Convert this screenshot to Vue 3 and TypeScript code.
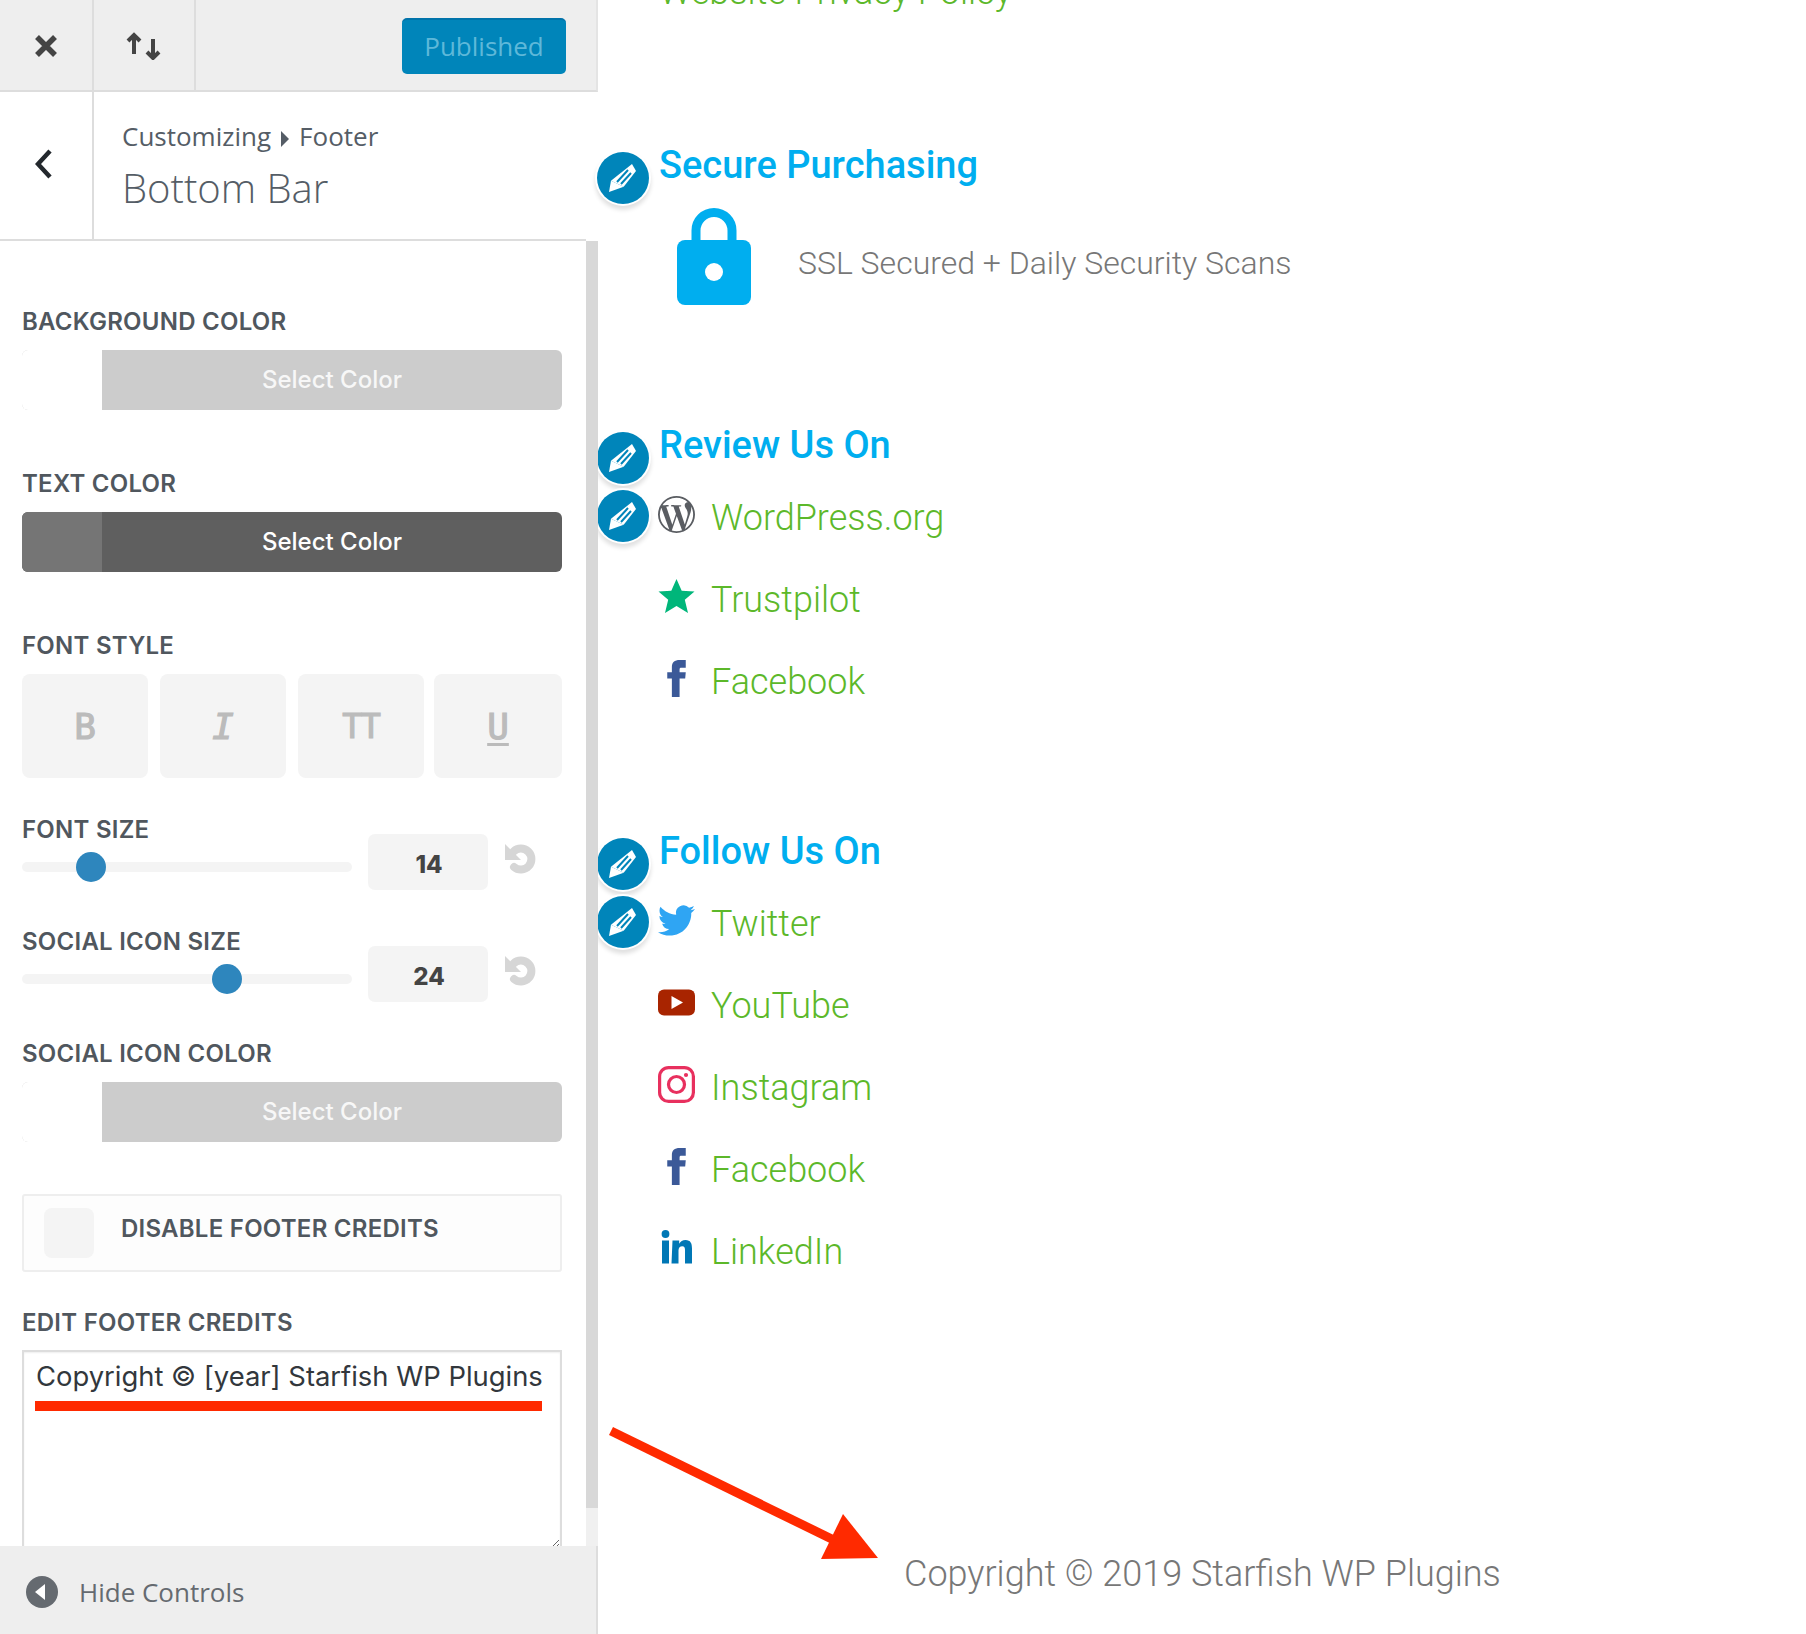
<script setup lang="ts">
interface LinkRow {
  icon: string;
  label: string;
}

const reviewLinks: LinkRow[] = [
  { icon: 'wordpress', label: 'WordPress.org' },
  { icon: 'star', label: 'Trustpilot' },
  { icon: 'facebook', label: 'Facebook' },
];

const followLinks: LinkRow[] = [
  { icon: 'twitter', label: 'Twitter' },
  { icon: 'youtube', label: 'YouTube' },
  { icon: 'instagram', label: 'Instagram' },
  { icon: 'facebook', label: 'Facebook' },
  { icon: 'linkedin', label: 'LinkedIn' },
];

const sliders = [
  { label: 'Font Size', value: 14, thumb: 54 },
  { label: 'Social Icon Size', value: 24, thumb: 190 },
];
</script>

<template>
  <div class="page">
    <svg class="sprite" aria-hidden="true">
      <defs>
        <symbol id="pencil" viewBox="0 0 52 52">
          <path d="M35 12l4 7-12.300 15.700L14 28.700z" fill="#fff" />
          <path d="M12 40l2-11.300 12.700 6z" fill="#fff" />
          <path d="M20 30l11-12M24 32l10-11" stroke="#0085ba" stroke-width="2" />
        </symbol>
        <symbol id="wordpress" viewBox="0 0 24 24">
          <path fill="#5a5d62" d="M21.469 6.825c.84 1.537 1.318 3.3 1.318 5.175 0 3.979-2.156 7.456-5.363 9.325l3.295-9.527c.615-1.54.82-2.771.82-3.864 0-.405-.026-.78-.07-1.11m-7.981.105c.647-.03 1.232-.105 1.232-.105.582-.075.514-.93-.067-.899 0 0-1.755.135-2.88.135-1.064 0-2.85-.15-2.85-.15-.585-.03-.661.855-.075.885 0 0 .54.061 1.125.09l1.68 4.605-2.37 7.08L5.354 6.9c.649-.03 1.234-.1 1.234-.1.585-.075.516-.93-.065-.896 0 0-1.746.138-2.874.138-.2 0-.438-.008-.69-.015C4.911 3.15 8.235 1.215 12 1.215c2.809 0 5.365 1.072 7.286 2.833-.046-.003-.091-.009-.141-.009-1.06 0-1.812.923-1.812 1.914 0 .89.513 1.643 1.06 2.531.411.72.89 1.643.89 2.977 0 .915-.354 1.994-.821 3.479l-1.075 3.585-3.9-11.61.001.014zM12 22.784c-1.059 0-2.081-.153-3.048-.437l3.237-9.406 3.315 9.087c.024.053.05.101.078.149-1.12.393-2.325.609-3.582.609M1.211 12c0-1.564.336-3.05.935-4.39L7.29 21.709C3.694 19.96 1.212 16.271 1.211 12M12 0C5.385 0 0 5.385 0 12s5.385 12 12 12 12-5.385 12-12S18.615 0 12 0" />
        </symbol>
        <symbol id="star" viewBox="0 0 37 37">
          <polygon fill="#00b67a" points="18.500,1 23.700,12.800 36.500,13.400 26.800,21.800 30,35 18.500,28 7,35 10.200,21.800 0.500,13.400 13.300,12.800" />
        </symbol>
        <symbol id="facebook" viewBox="0 0 24 24">
          <path fill="#3b5998" d="M9 8H6v4h3v12h5V12h3.642L18 8h-4V6.333C14 5.378 14.192 5 15.115 5H18V0h-3.808C10.596 0 9 1.583 9 4.615V8z" />
        </symbol>
        <symbol id="twitter" viewBox="0 0 24 24">
          <path fill="#2fa5f3" d="M23.953 4.57a10 10 0 01-2.825.775 4.958 4.958 0 002.163-2.723c-.951.555-2.005.959-3.127 1.184a4.92 4.92 0 00-8.384 4.482C7.69 8.095 4.067 6.13 1.64 3.162a4.822 4.822 0 00-.666 2.475c0 1.71.87 3.213 2.188 4.096a4.904 4.904 0 01-2.228-.616v.06a4.923 4.923 0 003.946 4.827 4.996 4.996 0 01-2.212.085 4.936 4.936 0 004.604 3.417 9.867 9.867 0 01-6.102 2.105c-.39 0-.779-.023-1.17-.067a13.995 13.995 0 007.557 2.209c9.053 0 13.998-7.496 13.998-13.985 0-.21 0-.42-.015-.63A9.935 9.935 0 0024 4.59z" />
        </symbol>
        <symbol id="youtube" viewBox="0 0 37 37">
          <rect x="0" y="5.500" width="37" height="26" rx="6" fill="#a82400" />
          <polygon points="13.500,12 13.500,25 25,18.500" fill="#fff" />
        </symbol>
        <symbol id="instagram" viewBox="0 0 37 37">
          <rect x="1.600" y="1.600" width="33.800" height="33.800" rx="9" fill="none" stroke="#e8305e" stroke-width="3.200" />
          <circle cx="18.500" cy="18.500" r="8" fill="none" stroke="#e8305e" stroke-width="3.200" />
          <circle cx="28" cy="9" r="2.100" fill="#e8305e" />
        </symbol>
        <symbol id="linkedin" viewBox="0 0 37 37">
          <circle cx="7.500" cy="4" r="3.900" fill="#0077b5" />
          <rect x="4" y="10.500" width="7" height="23" fill="#0077b5" />
          <path fill="#0077b5" d="M14.500 10.500h6.700v3.200c1.200-2.300 3.400-3.800 6.300-3.800 5.200 0 6.500 3.500 6.500 8.500v15.100h-7V20.100c0-2.400-.6-3.900-2.700-3.900-2.300 0-3.800 1.600-3.800 4.100v13.200h-7z" />
        </symbol>
      </defs>
    </svg>

    <aside class="panel">
      <div class="topbar">
        <button class="topbar-btn close">
          <svg width="24" height="24" viewBox="0 0 24 24"><path d="M3 3l18 18M21 3L3 21" stroke="#444" stroke-width="5.500" /></svg>
        </button>
        <button class="topbar-btn sort">
          <svg width="36" height="28" viewBox="0 0 36 28" fill="none" stroke="#444" stroke-width="4">
            <path d="M8 22V3M2 9l6-6 6 6" />
            <path d="M27 7v19M21 20l6 6 6-6" />
          </svg>
        </button>
        <button class="publish">Published</button>
      </div>

      <header class="section-head">
        <div class="back">
          <svg width="18" height="30" viewBox="0 0 18 30" fill="none"><path d="M15 2L3 15l12 13" stroke="#23282d" stroke-width="4.500" /></svg>
        </div>
        <div class="titles">
          <div class="crumb">Customizing<span class="crumb-arrow"></span>Footer</div>
          <h2>Bottom Bar</h2>
        </div>
      </header>

      <div class="controls-wrap">
        <div class="controls">
          <label class="ctl-label first">Background Color</label>
          <button class="color-btn empty"><span class="swatch"></span><span class="color-text">Select Color</span></button>

          <label class="ctl-label gap-l">Text Color</label>
          <button class="color-btn dark"><span class="swatch"></span><span class="color-text">Select Color</span></button>

          <label class="ctl-label gap-l">Font Style</label>
          <div class="style-btns">
            <button class="style-btn">B</button>
            <button class="style-btn italic">I</button>
            <button class="style-btn tt">TT</button>
            <button class="style-btn under">U</button>
          </div>

          <div v-for="s in sliders" :key="s.label" class="slider-row">
            <div class="slider-left">
              <label class="ctl-label">{{ s.label }}</label>
              <div class="track">
                <span class="thumb" :style="{ left: s.thumb + 'px' }"></span>
              </div>
            </div>
            <div class="num">{{ s.value }}</div>
            <svg class="undo" width="32" height="32" viewBox="0 0 32 32" fill="none">
              <path d="M8.500 7.600A10.500 10.500 0 1 1 9 23" stroke="#d6d6d6" stroke-width="8" stroke-linecap="round" />
              <polygon points="0,0 0,16 16,16" fill="#d6d6d6" />
            </svg>
          </div>

          <label class="ctl-label gap-s">Social Icon Color</label>
          <button class="color-btn empty"><span class="swatch"></span><span class="color-text">Select Color</span></button>

          <div class="check-box">
            <span class="check"></span>
            <span class="ctl-label">Disable Footer Credits</span>
          </div>

          <label class="ctl-label edit-label">Edit Footer Credits</label>
          <div class="credits">
            <textarea class="credits-input" spellcheck="false">Copyright © [year] Starfish WP Plugins</textarea>
            <span class="redline"></span>
          </div>
        </div>
        <div class="scrollbar"><span class="scroll-thumb"></span></div>
      </div>

      <footer class="hide-bar">
        <svg width="32" height="32" viewBox="0 0 32 32">
          <circle cx="16" cy="16" r="16" fill="#656a70" />
          <polygon points="19,8 19,24 9,16" fill="#fff" />
        </svg>
        <span>Hide Controls</span>
      </footer>
    </aside>

    <main class="preview">
      <a class="link privacy">Website Privacy Policy</a>

      <section class="widget secure">
        <span class="edit-pin"><svg width="52" height="52"><use href="#pencil" /></svg></span>
        <h3>Secure Purchasing</h3>
        <div class="secure-row">
          <svg width="74" height="97" viewBox="0 0 74 97">
            <path d="M19 40V22.500a18 18 0 0 1 36 0V40" fill="none" stroke="#00aeef" stroke-width="9" />
            <rect x="0" y="32" width="74" height="65" rx="8" fill="#00aeef" />
            <ellipse cx="37" cy="64" rx="9" ry="9" fill="#fff" />
          </svg>
          <span class="secure-text">SSL Secured + Daily Security Scans</span>
        </div>
      </section>

      <section class="widget review">
        <span class="edit-pin"><svg width="52" height="52"><use href="#pencil" /></svg></span>
        <span class="edit-pin second"><svg width="52" height="52"><use href="#pencil" /></svg></span>
        <h3>Review Us On</h3>
        <ul class="links">
          <li v-for="row in reviewLinks" :key="row.label">
            <svg class="row-icon" width="37" height="37"><use :href="'#' + row.icon" /></svg>
            <a class="link">{{ row.label }}</a>
          </li>
        </ul>
      </section>

      <section class="widget follow">
        <span class="edit-pin"><svg width="52" height="52"><use href="#pencil" /></svg></span>
        <span class="edit-pin second"><svg width="52" height="52"><use href="#pencil" /></svg></span>
        <h3>Follow Us On</h3>
        <ul class="links">
          <li v-for="row in followLinks" :key="row.label">
            <svg class="row-icon" width="37" height="37"><use :href="'#' + row.icon" /></svg>
            <a class="link">{{ row.label }}</a>
          </li>
        </ul>
      </section>

      <p class="copyright">Copyright © 2019 Starfish WP Plugins</p>
    </main>

    <!-- annotation arrow drawn on top of the screenshot -->
    <svg class="arrow" width="1806" height="1634" viewBox="0 0 1806 1634">
      <path d="M611 1431L846 1546" stroke="#ff2a00" stroke-width="9" fill="none" />
      <polygon points="843,1514 821,1559 878,1558" fill="#ff2a00" />
    </svg>
  </div>
</template>

<style>
html,
body {
  margin: 0;
  background: #fff;
}
</style>

<style scoped>
.page {
  position: relative;
  display: flex;
  width: 1806px;
  height: 1634px;
  overflow: hidden;
  background: #fff;
  font-family: "Open Sans", sans-serif;
}
.sprite {
  position: absolute;
  width: 0;
  height: 0;
}

/* customizer panel */
.panel {
  display: flex;
  flex-direction: column;
  flex: 0 0 598px;
  height: 1634px;
  position: relative;
  z-index: 1;
}
.topbar {
  display: flex;
  align-items: stretch;
  flex: 0 0 90px;
  background: #eee;
  border-bottom: 2px solid #ddd;
  border-right: 2px solid #e4e4e4;
}
.topbar-btn {
  display: flex;
  align-items: center;
  justify-content: center;
  border: 0;
  padding: 2px 0 0;
  background: none;
  border-right: 2px solid #ddd;
}
.close {
  width: 94px;
}
.sort {
  width: 102px;
}
.publish {
  width: 164px;
  height: 56px;
  margin: 18px 30px 0 auto;
  padding: 0 0 3px;
  border: 0;
  border-top: 2px solid #0073aa;
  border-radius: 5px;
  background: #0085ba;
  color: #5eb8d9;
  font: 400 26px "Open Sans", sans-serif;
}
.section-head {
  display: flex;
  flex: 0 0 147px;
  margin-right: 12px;
  border-bottom: 2px solid #ddd;
}
.back {
  display: flex;
  align-items: center;
  justify-content: center;
  width: 94px;
  border-right: 2px solid #ddd;
  padding: 0 4px 4px 0;
  box-sizing: border-box;
}
.titles {
  padding: 26px 0 0 28px;
  color: #555d66;
}
.crumb {
  font-size: 26px;
  line-height: 36px;
}
.crumb-arrow {
  display: inline-block;
  margin: 0 10px 0 10px;
  border-left: 8px solid #555d66;
  border-top: 8px solid transparent;
  border-bottom: 8px solid transparent;
  vertical-align: -1px;
}
.titles h2 {
  margin: 8px 0 0;
  font-size: 40px;
  font-weight: 300;
  line-height: 52px;
}

.controls-wrap {
  display: flex;
  flex: 1;
  min-height: 0;
  overflow: hidden;
}
.controls {
  flex: 1;
  padding: 0 24px 0 22px;
}
.scrollbar {
  display: flex;
  flex: 0 0 12px;
  background: #f0f0f0;
}
.scroll-thumb {
  width: 100%;
  height: 1267px;
  background: #d8d8d8;
}

.ctl-label {
  display: block;
  height: 28px;
  color: #50575e;
  font: 600 24px/30px Inter, sans-serif;
  letter-spacing: 0.25px;
  text-transform: uppercase;
}
.first {
  margin-top: 66px;
  margin-bottom: 15px;
}
.gap-l {
  margin-top: 59px;
  margin-bottom: 15px;
}
.gap-s {
  margin-top: 37px;
  margin-bottom: 15px;
}
.edit-label {
  margin-top: 36px;
  margin-bottom: 14px;
}
.color-btn {
  display: flex;
  width: 540px;
  height: 60px;
  padding: 0;
  border: 0;
  border-radius: 6px;
  overflow: hidden;
  background: #ccc;
}
.swatch {
  flex: 0 0 80px;
  height: 100%;
  background: #fff;
}
.color-text {
  flex: 1;
  color: #f7f7f7;
  font: 500 24px/60px Inter, sans-serif;
}
.dark {
  background: #5f5f5f;
}
.dark .swatch {
  background: #757575;
}
.dark .color-text {
  color: #fff;
}
.style-btns {
  display: flex;
  gap: 12px;
}
.style-btn {
  flex: 0 0 126px;
  height: 104px;
  padding: 0;
  border: 0;
  border-radius: 8px;
  background: #f4f4f4;
  color: #bbb;
  font: 400 36px "DejaVu Sans Mono", monospace;
  -webkit-text-stroke: 1.2px #bbb;
}
.italic {
  font-style: italic;
}
.tt {
  font-size: 33px;
  letter-spacing: -1px;
}
.under {
  flex-basis: 128px;
  margin-left: -2px;
  text-decoration: underline;
  text-decoration-thickness: 3px;
  text-underline-offset: 4px;
}
.slider-row {
  display: flex;
  align-items: flex-start;
  margin-top: 37px;
}
.slider-left {
  flex: 0 0 330px;
}
.track {
  position: relative;
  height: 10px;
  margin-top: 19px;
  border-radius: 5px;
  background: #f4f4f4;
}
.thumb {
  position: absolute;
  top: -10px;
  width: 30px;
  height: 30px;
  border-radius: 50%;
  background: #2e86bd;
}
.num {
  box-sizing: border-box;
  width: 120px;
  height: 56px;
  margin: 19px 0 0 16px;
  padding-left: 2px;
  border-radius: 7px;
  background: #f4f4f4;
  color: #444;
  font: 800 24px/62px Inter, sans-serif;
  text-align: center;
}
.undo {
  margin: 29px 0 0 17px;
}
.check-box {
  display: flex;
  align-items: center;
  box-sizing: border-box;
  width: 540px;
  height: 78px;
  margin-top: 52px;
  padding: 0 0 0 20px;
  border: 2px solid #eee;
  border-radius: 3px;
  background: #fdfdfd;
}
.check {
  flex: 0 0 50px;
  height: 50px;
  margin-right: 27px;
  border-radius: 8px;
  background: #f4f4f4;
}
.check-box .ctl-label {
  margin-top: -10px;
}
.credits {
  position: relative;
}
.credits-input {
  display: block;
  box-sizing: border-box;
  width: 540px;
  height: 200px;
  padding: 3px 12px;
  border: 2px solid #ddd;
  border-radius: 0;
  outline: 0;
  color: #32373c;
  font: 400 27.4px/42px Inter, sans-serif;
  box-shadow: inset 0 1px 2px rgba(0, 0, 0, 0.07);
}
.redline {
  position: absolute;
  left: 13px;
  top: 51px;
  width: 507px;
  height: 10px;
  background: #ff2a00;
}
.hide-bar {
  display: flex;
  align-items: center;
  gap: 21px;
  flex: 0 0 88px;
  box-sizing: border-box;
  padding: 4px 0 0 26px;
  background: #eee;
  border-right: 2px solid #ddd;
  color: #656a70;
  font-size: 26px;
  position: relative;
  z-index: 1;
}

/* page preview */
.preview {
  flex: 1;
  margin-top: -30px;
  padding-left: 61px;
  font-family: Roboto, sans-serif;
}
.link {
  color: #5cb82a;
  font-size: 36px;
  font-weight: 300;
  line-height: 44px;
}
.privacy {
  display: block;
  height: 44px;
}
.widget {
  position: relative;
}
.widget h3 {
  margin: 0;
  color: #00aeef;
  font-size: 38px;
  font-weight: 500;
  line-height: 44px;
}
.edit-pin {
  position: absolute;
  left: -62px;
  top: 9px;
  width: 52px;
  height: 52px;
  border-radius: 50%;
  background: #0085ba;
  box-shadow: 0 0 0 2px #fff, 0 4px 4px 2px rgba(0, 0, 0, 0.12);
}
.edit-pin.second {
  top: 67px;
}
.secure {
  margin-top: 129px;
}
.secure-row {
  display: flex;
  align-items: center;
  gap: 47px;
  margin: 21px 0 0 18px;
  color: #777;
  font-size: 32px;
  font-weight: 300;
}
.secure-text {
  margin-top: 12px;
}
.review {
  margin-top: 118px;
}
.follow {
  margin-top: 106px;
}
.links {
  list-style: none;
  margin: 10px 0 0 -2px;
  padding: 0;
}
.links li {
  display: flex;
  align-items: center;
  height: 82px;
  gap: 16px;
}
.row-icon {
  flex: none;
  margin: -8px 0 0 1px;
}
.copyright {
  margin: 259px 0 0 245px;
  color: #777;
  font-size: 36px;
  font-weight: 300;
  line-height: 44px;
}
.arrow {
  position: absolute;
  left: 0;
  top: 0;
  z-index: 2;
  pointer-events: none;
}
</style>
